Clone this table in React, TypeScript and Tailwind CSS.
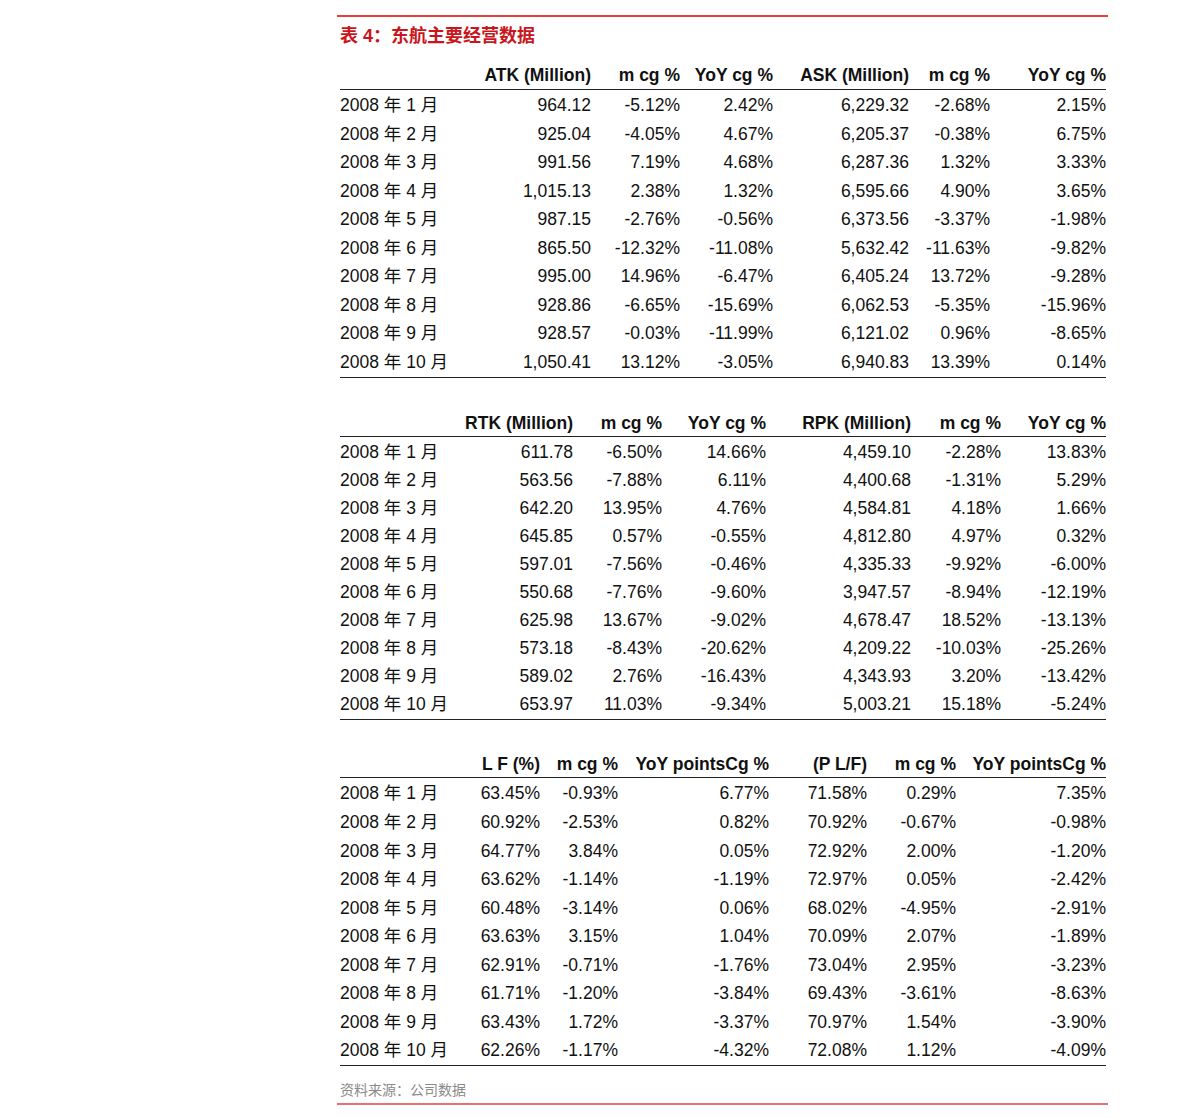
import React from "react"

type Table = {
  cols: string
  rowH: string
  headers: string[]
  rows: string[][]
}

const months = Array.from({ length: 10 }, (_, i) => `2008 年 ${i + 1} 月`)

const tables: Table[] = [
  {
    cols: "grid-cols-[140px_111px_89px_93px_136px_81px_116px]",
    rowH: "h-[28.56px]",
    headers: ["", "ATK (Million)", "m cg %", "YoY cg %", "ASK (Million)", "m cg %", "YoY cg %"],
    rows: [
      ["964.12", "-5.12%", "2.42%", "6,229.32", "-2.68%", "2.15%"],
      ["925.04", "-4.05%", "4.67%", "6,205.37", "-0.38%", "6.75%"],
      ["991.56", "7.19%", "4.68%", "6,287.36", "1.32%", "3.33%"],
      ["1,015.13", "2.38%", "1.32%", "6,595.66", "4.90%", "3.65%"],
      ["987.15", "-2.76%", "-0.56%", "6,373.56", "-3.37%", "-1.98%"],
      ["865.50", "-12.32%", "-11.08%", "5,632.42", "-11.63%", "-9.82%"],
      ["995.00", "14.96%", "-6.47%", "6,405.24", "13.72%", "-9.28%"],
      ["928.86", "-6.65%", "-15.69%", "6,062.53", "-5.35%", "-15.96%"],
      ["928.57", "-0.03%", "-11.99%", "6,121.02", "0.96%", "-8.65%"],
      ["1,050.41", "13.12%", "-3.05%", "6,940.83", "13.39%", "0.14%"],
    ],
  },
  {
    cols: "grid-cols-[120px_113px_89px_104px_145px_90px_105px]",
    rowH: "h-[28px]",
    headers: ["", "RTK (Million)", "m cg %", "YoY cg %", "RPK (Million)", "m cg %", "YoY cg %"],
    rows: [
      ["611.78", "-6.50%", "14.66%", "4,459.10", "-2.28%", "13.83%"],
      ["563.56", "-7.88%", "6.11%", "4,400.68", "-1.31%", "5.29%"],
      ["642.20", "13.95%", "4.76%", "4,584.81", "4.18%", "1.66%"],
      ["645.85", "0.57%", "-0.55%", "4,812.80", "4.97%", "0.32%"],
      ["597.01", "-7.56%", "-0.46%", "4,335.33", "-9.92%", "-6.00%"],
      ["550.68", "-7.76%", "-9.60%", "3,947.57", "-8.94%", "-12.19%"],
      ["625.98", "13.67%", "-9.02%", "4,678.47", "18.52%", "-13.13%"],
      ["573.18", "-8.43%", "-20.62%", "4,209.22", "-10.03%", "-25.26%"],
      ["589.02", "2.76%", "-16.43%", "4,343.93", "3.20%", "-13.42%"],
      ["653.97", "11.03%", "-9.34%", "5,003.21", "15.18%", "-5.24%"],
    ],
  },
  {
    cols: "grid-cols-[130px_70px_78px_151px_98px_89px_150px]",
    rowH: "h-[28.56px]",
    headers: ["", "L F (%)", "m cg %", "YoY pointsCg %", "(P L/F)", "m cg %", "YoY pointsCg %"],
    rows: [
      ["63.45%", "-0.93%", "6.77%", "71.58%", "0.29%", "7.35%"],
      ["60.92%", "-2.53%", "0.82%", "70.92%", "-0.67%", "-0.98%"],
      ["64.77%", "3.84%", "0.05%", "72.92%", "2.00%", "-1.20%"],
      ["63.62%", "-1.14%", "-1.19%", "72.97%", "0.05%", "-2.42%"],
      ["60.48%", "-3.14%", "0.06%", "68.02%", "-4.95%", "-2.91%"],
      ["63.63%", "3.15%", "1.04%", "70.09%", "2.07%", "-1.89%"],
      ["62.91%", "-0.71%", "-1.76%", "73.04%", "2.95%", "-3.23%"],
      ["61.71%", "-1.20%", "-3.84%", "69.43%", "-3.61%", "-8.63%"],
      ["63.43%", "1.72%", "-3.37%", "70.97%", "1.54%", "-3.90%"],
      ["62.26%", "-1.17%", "-4.32%", "72.08%", "1.12%", "-4.09%"],
    ],
  },
]

function DataTable({ t }: { t: Table }) {
  return (
    <div className="w-[766px] ml-[3px]">
      {/* header */}
      <div className={`grid ${t.cols} h-[26px] items-center border-b border-[#222] font-bold`}>
        {t.headers.map((h, i) => (
          <div key={i} className={i === 0 ? "text-left" : "text-right whitespace-nowrap"}>
            {h}
          </div>
        ))}
      </div>
      <div className="pt-[2px] border-b border-[#222]">
        {t.rows.map((r, ri) => (
          <div key={ri} className={`grid ${t.cols} ${t.rowH} items-center`}>
            <div className="text-left whitespace-nowrap">{months[ri]}</div>
            {r.map((c, ci) => (
              <div key={ci} className="text-right whitespace-nowrap">
                {c}
              </div>
            ))}
          </div>
        ))}
      </div>
    </div>
  )
}

export default function App() {
  return (
    <div className="w-[1190px] h-[1118px] bg-white text-[#111] text-[17.5px] leading-none font-['Liberation_Sans','Noto_Sans_CJK_SC',sans-serif]">
      <div className="ml-[337px] w-[771px] pt-[15px]">
        <div className="h-[1.5px] bg-[#e5403a]" />
        <div className="ml-[3px] mt-[10px] h-[18px] flex items-center text-[18px] font-bold text-[#c9161d]">
          表 4：东航主要经营数据
        </div>
        <div className="mt-[19px]">
          <DataTable t={tables[0]} />
        </div>
        <div className="mt-[33px]">
          <DataTable t={tables[1]} />
        </div>
        <div className="mt-[32px]">
          <DataTable t={tables[2]} />
        </div>
        <div className="ml-[3px] mt-[16px] h-[16px] flex items-center text-[14px] text-[#8a8a8a]">
          资料来源：公司数据
        </div>
        <div className="mt-[5px] h-[1.5px] bg-[#e87070]" />
      </div>
    </div>
  )
}
